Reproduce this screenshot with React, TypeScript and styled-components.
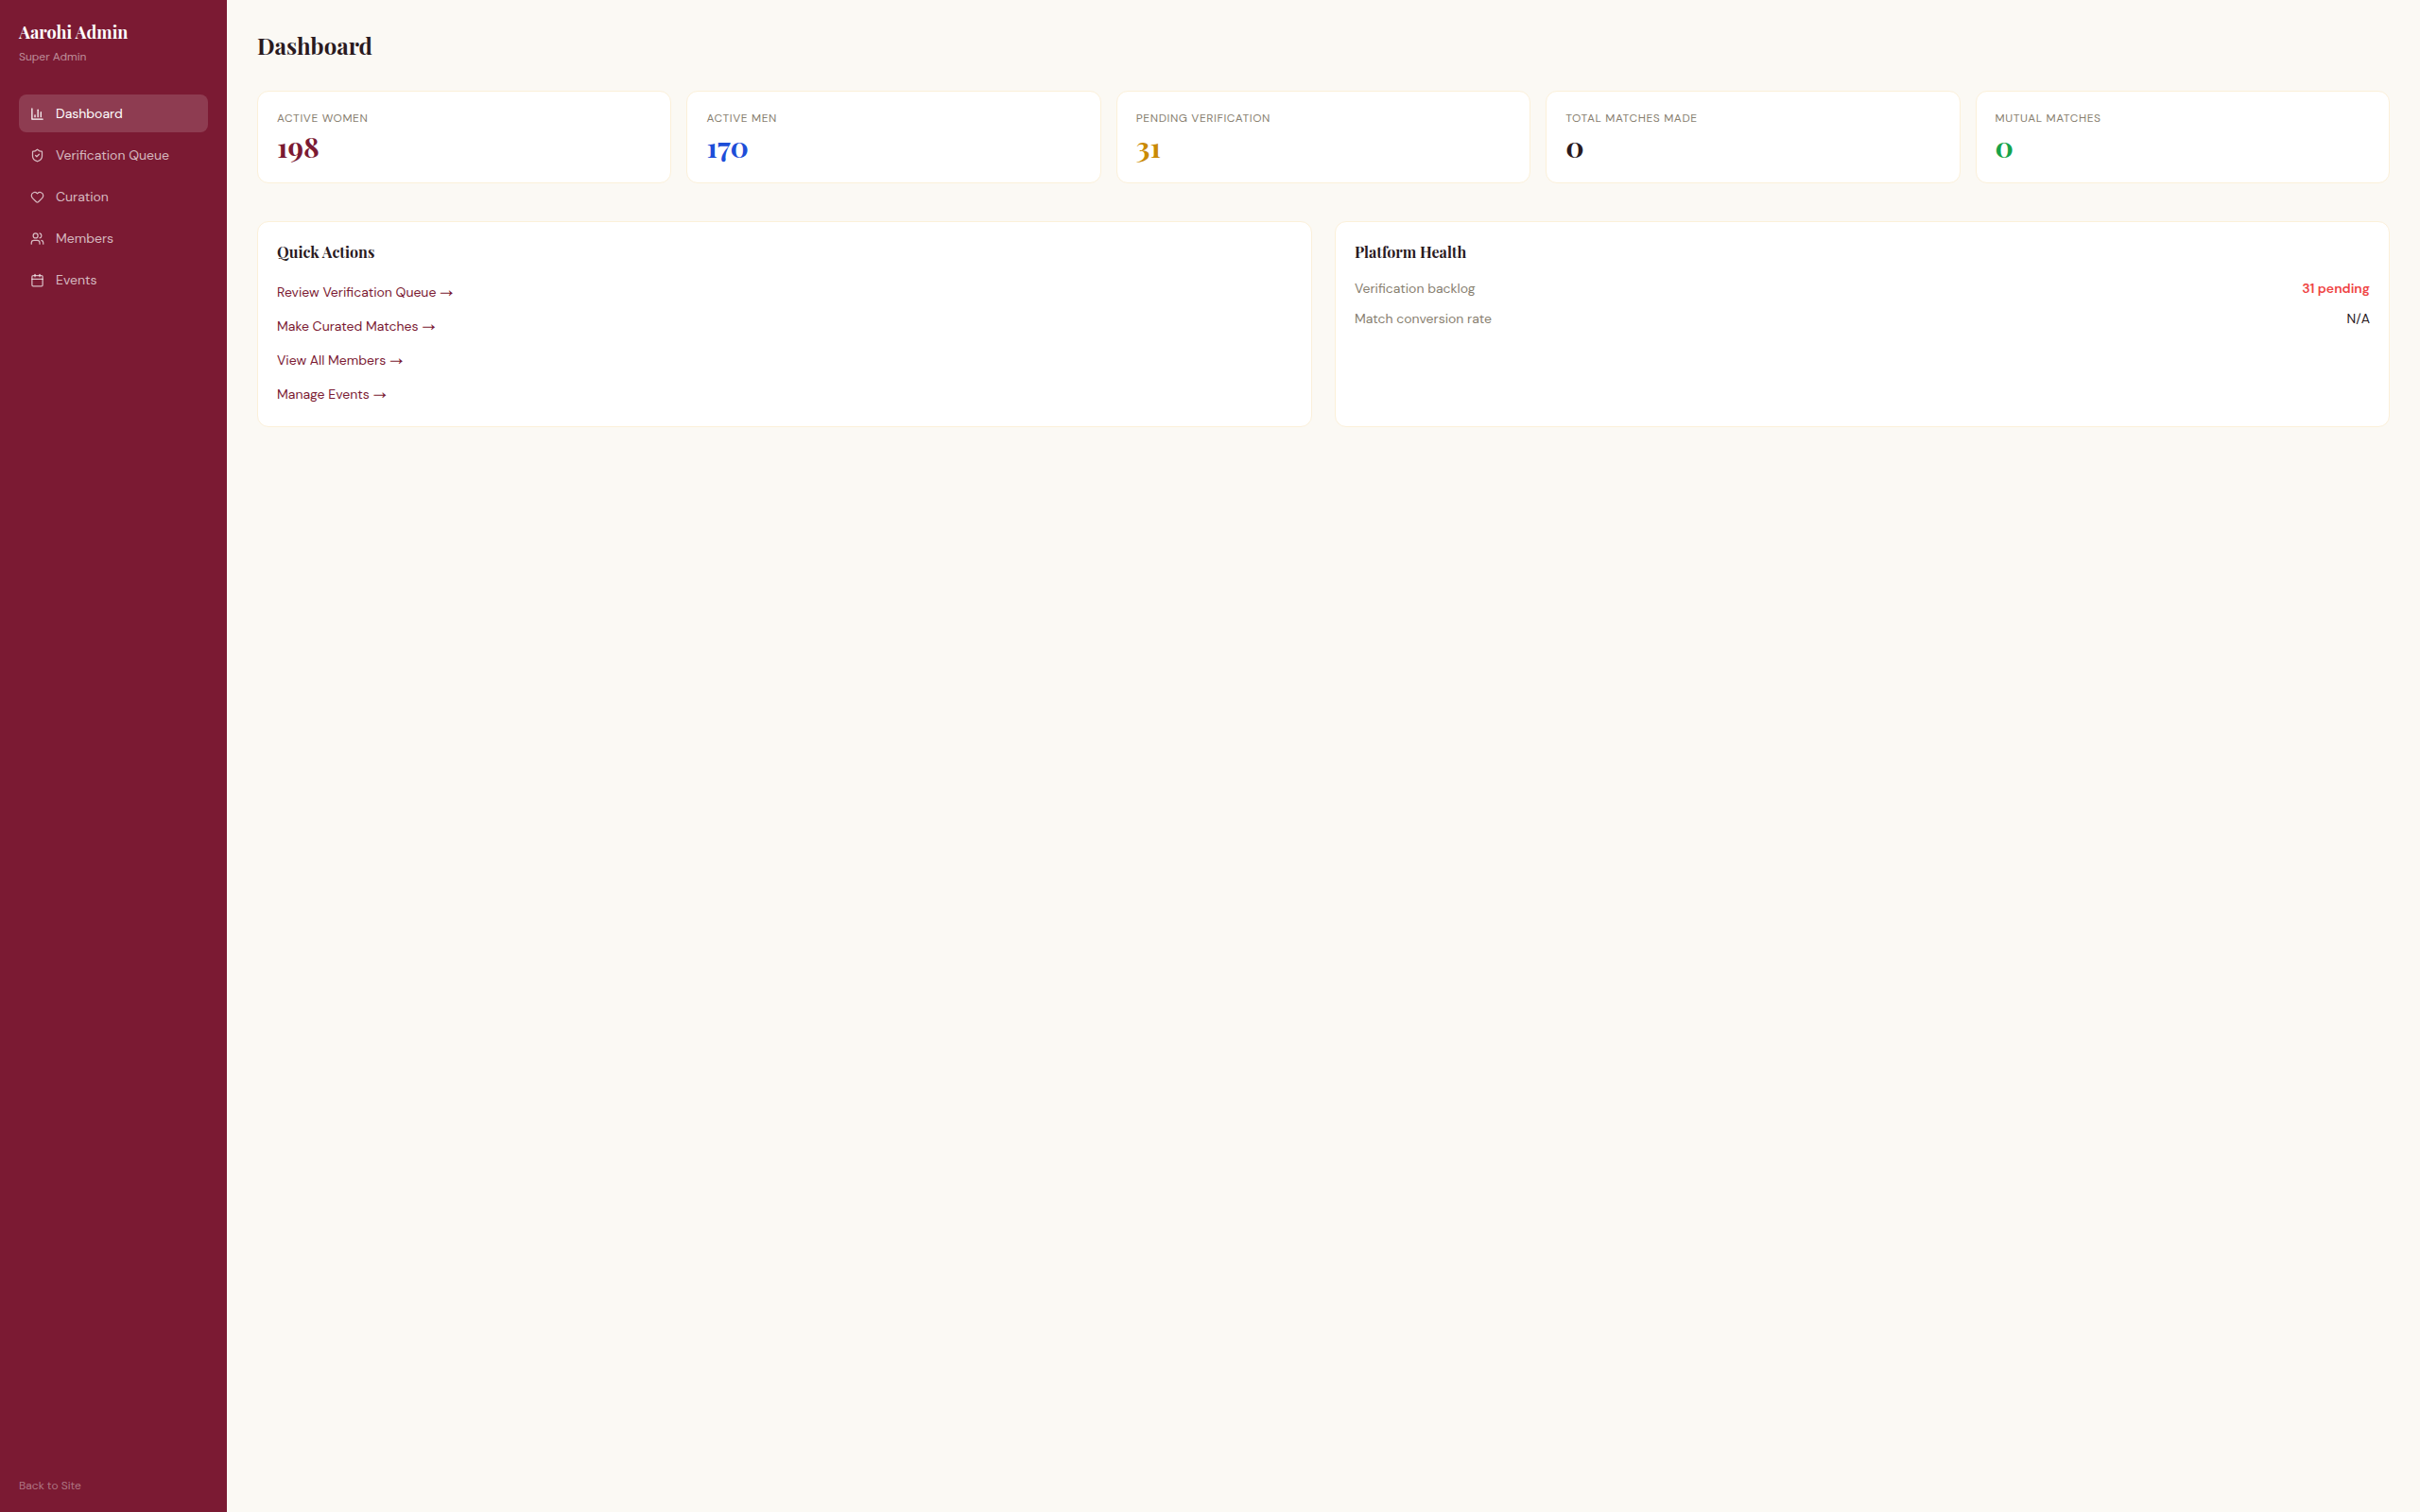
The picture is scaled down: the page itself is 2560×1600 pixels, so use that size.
import React from 'react';
import styled, { createGlobalStyle } from 'styled-components';
import { Calendar, Heart, ShieldCheck, Users } from 'lucide-react';

const color = {
  burgundy: '#7b1a33',
  ink: '#2a1a1f',
  muted: '#888070',
  page: '#fbf9f4',
  line: '#fbf0d9',
  blue: '#1d4ed8',
  amber: '#ca8a04',
  green: '#16a34a',
  red: '#ef4444',
};

const sans = '"DM Sans", Inter, "Liberation Sans", sans-serif';
const serif = '"Playfair Display", "Liberation Serif", serif';

const GlobalStyle = createGlobalStyle`
  *, *::before, *::after { box-sizing: border-box; }
  body {
    margin: 0;
    background: ${color.page};
    color: ${color.ink};
    font: 14px/20px ${sans};
  }
  h1, h2, p, ul, dl, dd { margin: 0; padding: 0; }
  ul { list-style: none; }
  a { color: inherit; text-decoration: none; }
`;

const Layout = styled.div`
  display: flex;
  min-height: 100vh;
`;

const Sidebar = styled.aside`
  display: flex;
  flex-direction: column;
  flex: 0 0 240px;
  padding: 20px;
  background: ${color.burgundy};
  color: #fff;
`;

const Brand = styled.p`
  font: 700 18px/28px ${serif};
`;

const Role = styled.p`
  margin-bottom: 32px;
  padding-top: 4px;
  font-size: 12px;
  line-height: 16px;
  color: rgba(255, 255, 255, 0.5);
`;

const NavList = styled.ul`
  display: flex;
  flex-direction: column;
  gap: 4px;
`;

const NavLink = styled.a<{ $active: boolean }>`
  display: flex;
  align-items: center;
  gap: 12px;
  height: 40px;
  padding: 0 12px;
  border-radius: 8px;
  background: ${(p) => (p.$active ? 'rgba(255, 255, 255, 0.15)' : 'transparent')};
  color: ${(p) => (p.$active ? '#fff' : 'rgba(255, 255, 255, 0.7)')};
`;

const BackLink = styled.a`
  margin-top: auto;
  font-size: 12px;
  line-height: 16px;
  color: rgba(255, 255, 255, 0.4);
`;

const Main = styled.main`
  flex: 1;
  min-width: 0;
  padding: 32px;
`;

const PageTitle = styled.h1`
  margin-bottom: 32px;
  font: 700 24px/32px ${serif};
`;

const Stats = styled.dl`
  display: grid;
  grid-template-columns: repeat(5, 1fr);
  gap: 16px;
  margin-bottom: 40px;
`;

const Card = styled.div`
  padding: 20px;
  border: 1px solid ${color.line};
  border-radius: 12px;
  background: #fff;
`;

const StatLabel = styled.dt`
  margin-bottom: 4px;
  font-size: 12px;
  line-height: 16px;
  letter-spacing: 0.05em;
  text-transform: uppercase;
  color: ${color.muted};
`;

const StatValue = styled.dd<{ $tone: string }>`
  font: 700 30px/36px ${serif};
  color: ${(p) => p.$tone};
`;

const Panels = styled.div`
  display: grid;
  grid-template-columns: repeat(2, 1fr);
  gap: 24px;
`;

const PanelTitle = styled.h2`
  margin-bottom: 16px;
  font: 700 16px/24px ${serif};
`;

const ActionList = styled.ul`
  display: flex;
  flex-direction: column;
  gap: 8px;
`;

const ActionLink = styled.a`
  display: block;
  padding: 4px 0;
  line-height: 20px;
  color: ${color.burgundy};
`;

const Arrow = styled.span`
  font-family: "Noto Sans Math", "Noto Sans CJK JP", sans-serif;
  line-height: 1;
`;

const HealthList = styled.dl`
  display: flex;
  flex-direction: column;
  gap: 12px;
`;

const HealthRow = styled.div`
  display: flex;
  justify-content: space-between;
`;

const HealthLabel = styled.dt`
  color: ${color.muted};
`;

const HealthValue = styled.dd<{ $alert?: boolean }>`
  font-weight: ${(p) => (p.$alert ? 600 : 400)};
  color: ${(p) => (p.$alert ? color.red : color.ink)};
`;

const ChartIcon = ({ size }: { size: number }) => (
  <svg
    width={size}
    height={size}
    viewBox="0 0 24 24"
    fill="none"
    stroke="currentColor"
    strokeWidth={2}
    strokeLinecap="round"
    strokeLinejoin="round"
    aria-hidden
  >
    <path d="M3 3v18h18" />
    <path d="M18 17V9" />
    <path d="M13 17V5" />
    <path d="M8 17v-3" />
  </svg>
);

const navItems = [
  { label: 'Dashboard', icon: ChartIcon },
  { label: 'Verification Queue', icon: ShieldCheck },
  { label: 'Curation', icon: Heart },
  { label: 'Members', icon: Users },
  { label: 'Events', icon: Calendar },
];

const stats = [
  { label: 'Active Women', value: 198, tone: color.burgundy },
  { label: 'Active Men', value: 170, tone: color.blue },
  { label: 'Pending Verification', value: 31, tone: color.amber },
  { label: 'Total Matches Made', value: 0, tone: color.ink },
  { label: 'Mutual Matches', value: 0, tone: color.green },
];

const actions = ['Review Verification Queue', 'Make Curated Matches', 'View All Members', 'Manage Events'];

export default function App() {
  return (
    <Layout>
      <GlobalStyle />
      <Sidebar>
        <Brand>Aarohi Admin</Brand>
        <Role>Super Admin</Role>
        <nav>
          <NavList>
            {navItems.map(({ label, icon: Icon }, i) => (
              <li key={label}>
                <NavLink href="#" $active={i === 0}>
                  <Icon size={15} />
                  {label}
                </NavLink>
              </li>
            ))}
          </NavList>
        </nav>
        <BackLink href="#">Back to Site</BackLink>
      </Sidebar>
      <Main>
        <PageTitle>Dashboard</PageTitle>
        <Stats>
          {stats.map((s) => (
            <Card key={s.label}>
              <StatLabel>{s.label}</StatLabel>
              <StatValue $tone={s.tone}>{s.value}</StatValue>
            </Card>
          ))}
        </Stats>
        <Panels>
          <Card>
            <PanelTitle>Quick Actions</PanelTitle>
            <ActionList>
              {actions.map((a) => (
                <li key={a}>
                  <ActionLink href="#">
                    {a} <Arrow>→</Arrow>
                  </ActionLink>
                </li>
              ))}
            </ActionList>
          </Card>
          <Card>
            <PanelTitle>Platform Health</PanelTitle>
            <HealthList>
              <HealthRow>
                <HealthLabel>Verification backlog</HealthLabel>
                <HealthValue $alert>31 pending</HealthValue>
              </HealthRow>
              <HealthRow>
                <HealthLabel>Match conversion rate</HealthLabel>
                <HealthValue>N/A</HealthValue>
              </HealthRow>
            </HealthList>
          </Card>
        </Panels>
      </Main>
    </Layout>
  );
}
